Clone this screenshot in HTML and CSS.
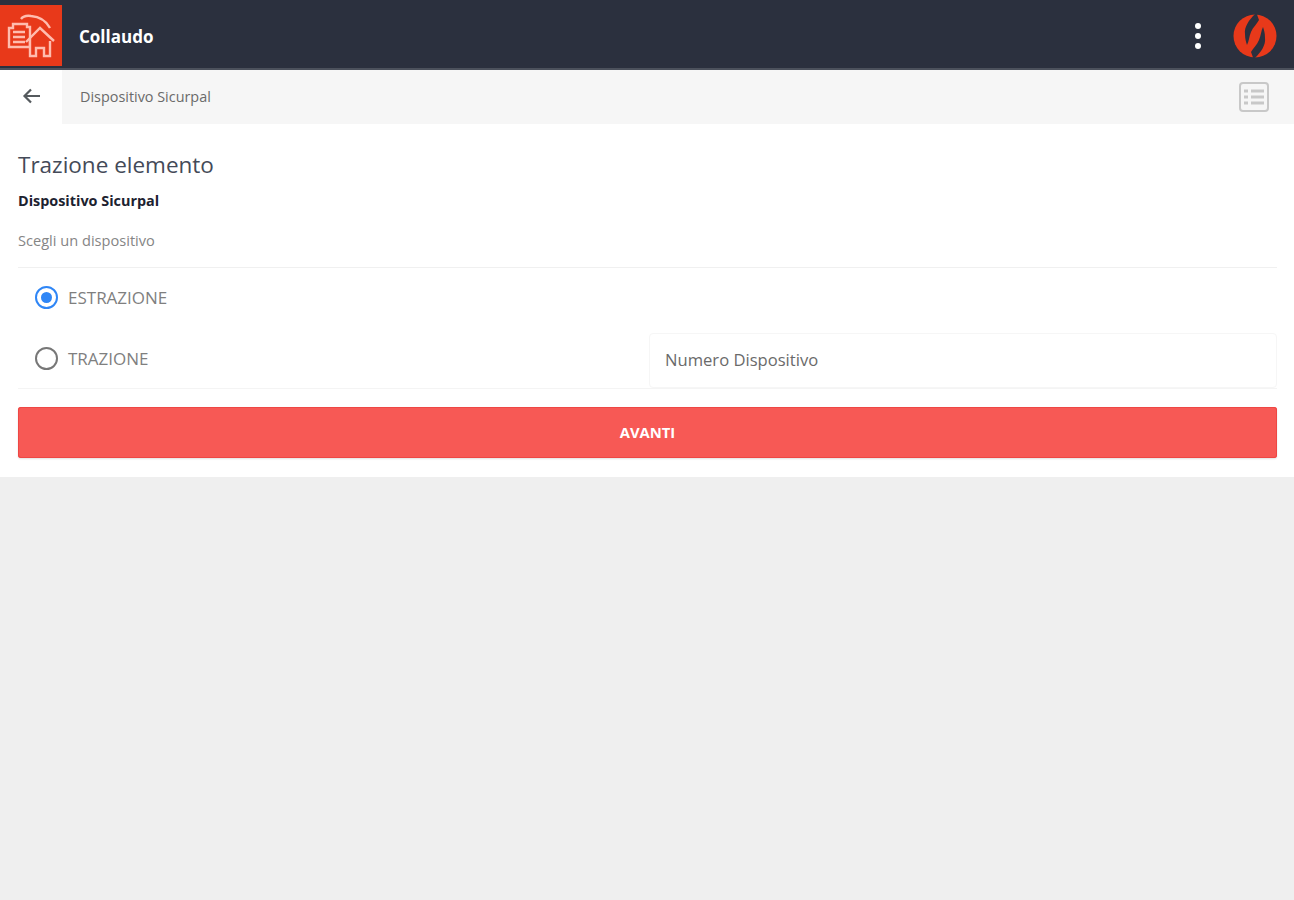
FILE: index.html
```html
<!DOCTYPE html>
<html lang="en">

<head>
    <meta charset="UTF-8">
    <meta name="viewport" content="width=device-width, initial-scale=1.0">
    <title>Collaudo</title>
    <link rel="stylesheet" href="styles.css">
</head>

<body>
    <header class="topbar">
        <div class="topbar__logo">
            <svg width="48" height="46" viewBox="0 0 48 46" fill="none" stroke="#ffbcae" stroke-width="2.4">
                <path d="M6 11h14v3h3v20H2V15h4z" />
                <path d="M6 19h12M6 24h12M6 29h12" />
                <path d="M14 6 Q17 2 24 3 Q37 4 43 15" />
                <path d="M19 29 L33 15 L47 28" />
                <path d="M23 28 V43 H29 V35 H37 V43 H43 V28" fill="#e8391a" />
            </svg>
        </div>
        <h1 class="topbar__title">Collaudo</h1>
        <div class="topbar__dots">
            <span></span>
            <span></span>
            <span></span>
        </div>
        <svg class="topbar__brand" width="44" height="44" viewBox="0 0 44 44">
            <circle cx="22" cy="22" r="21.5" fill="#e8391a" />
            <path fill="#2b303e" d="M22 0C16 6 11 13 12 20C12 25 13 28 14 31C16 27 16 23 18 18C20 13 24 10 26 6C25 3 24 1 24 0Z" />
            <path fill="#2b303e" d="M22 44C28 38 33 31 32 24C32 19 31 16 30 13C28 17 28 21 26 26C24 31 20 34 18 38C19 41 20 43 20 44Z" />
        </svg>
    </header>

    <div class="subbar">
        <div class="subbar__back">
            <svg width="18" height="16" viewBox="0 0 18 16" fill="none" stroke="#555a5e" stroke-width="2.2">
                <path d="M18 8H3M9 1.5L2.5 8l6.5 6.5" />
            </svg>
        </div>
        <div class="subbar__main">
            <span class="subbar__label">Dispositivo Sicurpal</span>
            <svg width="30" height="30" viewBox="0 0 30 30" fill="none" stroke="#c8c8c8" stroke-width="2">
                <rect x="1" y="1" width="28" height="28" rx="3" />
                <path stroke-width="3" d="M5 9h4M12 9h13M5 15h4M12 15h13M5 21h4M12 21h13" />
            </svg>
        </div>
    </div>

    <main class="panel">
        <h2 class="panel__title">Trazione elemento</h2>
        <p class="panel__device">Dispositivo Sicurpal</p>
        <p class="panel__hint">Scegli un dispositivo</p>

        <div class="options">
            <div class="options__row options__row--first">
                <label class="radio">
                    <span class="radio__dot radio__dot--on"></span>
                    ESTRAZIONE
                </label>
            </div>
            <div class="options__row">
                <label class="radio radio--second">
                    <span class="radio__dot"></span>
                    TRAZIONE
                </label>
                <div class="field">Numero Dispositivo</div>
            </div>
        </div>

        <button class="btn-next">AVANTI</button>
    </main>
</body>

</html>
```

FILE: styles.css
```css
* {
    margin: 0;
    padding: 0;
    box-sizing: border-box;
}

body {
    background: #efefef;
    font-family: 'Open Sans', 'Liberation Sans', sans-serif;
    color: #303030;
}

.topbar {
    display: flex;
    align-items: center;
    height: 70px;
    padding-top: 4px;
    background: #2b303e;
    border-bottom: 2px solid #4c515c;
}

.topbar__logo {
    display: flex;
    align-items: center;
    justify-content: center;
    align-self: flex-start;
    width: 62px;
    height: 61px;
    margin-top: 1px;
    background: #e8391a;
}

.topbar__title {
    margin-left: 17px;
    font-size: 17px;
    font-weight: 700;
    color: #fff;
}

.topbar__dots {
    display: flex;
    flex-direction: column;
    gap: 4px;
    margin-left: auto;
    margin-right: 32px;
}

.topbar__dots span {
    width: 6px;
    height: 6px;
    border-radius: 50%;
    background: #fff;
}

.topbar__brand {
    margin-right: 17px;
}

.subbar {
    display: flex;
    height: 54px;
    background: #fff;
}

.subbar__back {
    display: flex;
    align-items: center;
    justify-content: center;
    width: 62px;
    padding-bottom: 2px;
}

.subbar__main {
    flex: 1;
    display: flex;
    align-items: center;
    justify-content: space-between;
    padding: 0 25px 0 18px;
    background: #f6f6f6;
}

.subbar__label {
    padding-bottom: 2px;
    font-size: 14.4px;
    color: #6a6a6a;
}

.panel {
    height: 353px;
    padding: 28px 17px 0 18px;
    background: #fff;
}

.panel__title {
    font-size: 22.5px;
    font-weight: 400;
    line-height: 26px;
    color: #444a58;
}

.panel__device {
    margin-top: 15px;
    font-size: 14.4px;
    font-weight: 700;
    line-height: 16px;
    color: #1c2230;
}

.panel__hint {
    margin-top: 23px;
    font-size: 14.6px;
    line-height: 16px;
    color: #858585;
}

.options {
    margin-top: 19px;
    border-top: 1px solid #f0f0f0;
    border-bottom: 1px solid #f4f4f4;
}

.options__row {
    display: flex;
    align-items: center;
    justify-content: space-between;
    height: 56px;
}

.options__row--first {
    height: 64px;
    padding-bottom: 6px;
}

.radio {
    display: flex;
    align-items: center;
    gap: 10px;
    padding-left: 17px;
    font-size: 17px;
    color: #7f7f7f;
}

.radio--second {
    padding-bottom: 3px;
}

.radio__dot {
    display: flex;
    align-items: center;
    justify-content: center;
    width: 23px;
    height: 23px;
    border: 2px solid #777;
    border-radius: 50%;
}

.radio__dot--on {
    border-color: #2f86f6;
}

.radio__dot--on::after {
    content: '';
    width: 11px;
    height: 11px;
    border-radius: 50%;
    background: #2f86f6;
}

.field {
    display: flex;
    align-items: center;
    width: 628px;
    height: 55px;
    padding: 0 0 1px 15px;
    border: 1px solid #f6f6f6;
    border-radius: 4px;
    font-size: 16.6px;
    color: #6a6a6a;
}

.btn-next {
    display: block;
    width: 100%;
    height: 51px;
    margin-top: 18px;
    padding-bottom: 2px;
    border: 0;
    border-radius: 3px;
    background: #f75955;
    box-shadow: inset 0 0 0 1px #ee4744, 0 1px 2px rgba(0, 0, 0, .12);
    font-family: inherit;
    font-size: 14.8px;
    font-weight: 700;
    color: #fff;
}
```
